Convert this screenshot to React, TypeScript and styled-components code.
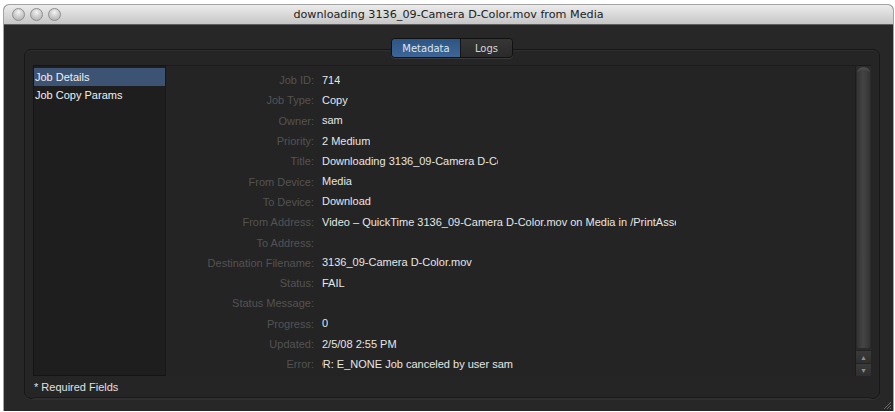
import { createGlobalStyle, styled } from "styled-components"

const GlobalStyle = createGlobalStyle`
  html, body { margin: 0; padding: 0; background: #ffffff; }
  body { font-family: "Liberation Sans", "DejaVu Sans", sans-serif; }
`

interface DetailRow {
  label: string
  value: string
  clip?: number
  shift?: number
}

const rows: DetailRow[] = [
  { label: "Job ID:", value: "714" },
  { label: "Job Type:", value: "Copy" },
  { label: "Owner:", value: "sam" },
  { label: "Priority:", value: "2 Medium" },
  { label: "Title:", value: "Downloading 3136_09-Camera D-Color.mov", clip: 176 },
  { label: "From Device:", value: "Media" },
  { label: "To Device:", value: "Download" },
  { label: "From Address:", value: "Video – QuickTime 3136_09-Camera D-Color.mov on Media in /PrintAssets/", clip: 354 },
  { label: "To Address:", value: "" },
  { label: "Destination Filename:", value: "3136_09-Camera D-Color.mov" },
  { label: "Status:", value: "FAIL" },
  { label: "Status Message:", value: "" },
  { label: "Progress:", value: "0" },
  { label: "Updated:", value: "2/5/08 2:55 PM" },
  { label: "Error:", value: "ERROR: E_NONE  Job canceled by user sam", shift: 31, clip: 300 },
]

const Window = styled.div`
  position: relative;
  margin: 5px 2px 0 4px;
  height: 406px;
  display: flex;
  flex-direction: column;
  background: #272727;
  border-radius: 5px 5px 0 0;
  overflow: hidden;
  box-shadow: 0 0 0 1px #a3a3a3;
`
const TitleBar = styled.div`
  height: 19px;
  flex: none;
  display: grid;
  grid-template-columns: 1fr auto 1fr;
  align-items: center;
  background: linear-gradient(#ececec, #c6c6c6);
  border-bottom: 1px solid #5e5e5e;
`
const Lights = styled.div`
  display: flex;
  gap: 5px;
  padding-left: 8px;
`
const Light = styled.span`
  width: 13px;
  height: 13px;
  box-sizing: border-box;
  border-radius: 50%;
  border: 1px solid #8e8e8e;
  background: radial-gradient(circle at 50% 30%, #f4f4f4 0, #cfcfcf 45%, #a9a9a9 100%);
`
const Title = styled.div`
  font-family: "DejaVu Sans", sans-serif;
  font-size: 11.2px;
  color: #222;
`
const Body = styled.div`
  flex: 1;
  display: flex;
  flex-direction: column;
  padding: 13px 13px 12px 20px;
`
const Segmented = styled.div`
  align-self: center;
  display: flex;
  height: 18px;
  margin-bottom: -9px;
  position: relative;
  z-index: 1;
  border: 1px solid #111;
  border-radius: 4px;
  overflow: hidden;
  box-shadow: 0 1px 0 #3a3a3a;
`
const Segment = styled.div<{ $active: boolean }>`
  display: flex;
  align-items: center;
  justify-content: center;
  width: ${({ $active }) => ($active ? "68px" : "51px")};
  font-family: "DejaVu Sans", sans-serif;
  font-size: 10px;
  color: ${({ $active }) => ($active ? "#dfe6ef" : "#d4d4d4")};
  background: ${({ $active }) =>
    $active ? "linear-gradient(#2d5584, #3d6697)" : "linear-gradient(#363636, #2a2a2a)"};
  border-left: ${({ $active }) => ($active ? "none" : "1px solid #151515")};
`
const Panel = styled.div`
  flex: 1;
  display: flex;
  flex-direction: column;
  padding: 15px 8px 0 8px;
  background: #252525;
  border: 1px solid #171717;
  border-radius: 7px;
  box-shadow: inset 0 1px 0 #2f2f2f, 0 1px 0 #303030;
`
const MainRow = styled.div`
  flex: 1;
  display: flex;
  min-height: 0;
`
const Sidebar = styled.div`
  width: 131px;
  flex: none;
  padding-top: 2px;
  background: #1e1e1e;
  border: 1px solid #141414;
  border-right: 1px solid #181818;
`
const SideItem = styled.div<{ $selected?: boolean }>`
  height: 18px;
  line-height: 18px;
  padding-left: 1px;
  font-size: 11px;
  color: #f0f0f0;
  background: ${({ $selected }) => ($selected ? "#3d5373" : "transparent")};
`
const Details = styled.div`
  flex: 1;
  display: flex;
  background: #242424;
  border-top: 1px solid #1b1b1b;
`
const RowList = styled.div`
  flex: 1;
  padding-top: 4px;
`
const Row = styled.div`
  height: 20.3px;
  display: flex;
  align-items: center;
  font-size: 11px;
`
const Label = styled.div`
  width: 148px;
  flex: none;
  text-align: right;
  color: #535353;
`
const Value = styled.div<{ $clip?: number }>`
  margin-left: 8px;
  line-height: 15px;
  color: #e6e6e6;
  white-space: nowrap;
  overflow: hidden;
  ${({ $clip }) => ($clip ? `width: ${$clip}px;` : "")}
`
const ShiftedText = styled.span<{ $shift: number }>`
  display: inline-block;
  margin-left: -${({ $shift }) => $shift}px;
`
const Scrollbar = styled.div`
  width: 15px;
  flex: none;
  display: flex;
  flex-direction: column;
  background: #2b2b2b;
  border-left: 1px solid #1d1d1d;
`
const Thumb = styled.div`
  flex: 1;
  margin: 1px 1px 2px;
  border-radius: 6px 6px 2px 2px;
  background: linear-gradient(90deg, #333 0, #444 45%, #3e3e3e 70%, #333 100%);
  border-top: 3px solid #4a4a4a;
`
const Arrow = styled.div`
  height: 12px;
  display: flex;
  align-items: center;
  justify-content: center;
  font-size: 7px;
  color: #8c8c8c;
  background: linear-gradient(#3a3a3a, #2f2f2f);
  border-top: 1px solid #232323;
`
const Footer = styled.div`
  height: 21px;
  display: flex;
  align-items: center;
  padding-left: 1px;
  font-size: 11px;
  color: #e0e0e0;
  border-bottom: 1px solid #1b1b1b;
  box-shadow: 0 1px 0 #2e2e2e;
`
const Grip = styled.svg`
  position: absolute;
  right: 1px;
  bottom: 1px;
`

export default function App() {
  return (
    <>
      <GlobalStyle />
      <Window>
        <TitleBar>
          <Lights>
            <Light />
            <Light />
            <Light />
          </Lights>
          <Title>downloading 3136_09-Camera D-Color.mov from Media</Title>
          <div />
        </TitleBar>
        <Body>
          <Segmented>
            <Segment $active>Metadata</Segment>
            <Segment $active={false}>Logs</Segment>
          </Segmented>
          <Panel>
            <MainRow>
              <Sidebar>
                <SideItem $selected>Job Details</SideItem>
                <SideItem>Job Copy Params</SideItem>
              </Sidebar>
              <Details>
                <RowList>
                  {rows.map((row) => (
                    <Row key={row.label}>
                      <Label>{row.label}</Label>
                      <Value $clip={row.clip}>
                        {row.shift ? <ShiftedText $shift={row.shift}>{row.value}</ShiftedText> : row.value}
                      </Value>
                    </Row>
                  ))}
                </RowList>
                <Scrollbar>
                  <Thumb />
                  <Arrow>▲</Arrow>
                  <Arrow>▼</Arrow>
                </Scrollbar>
              </Details>
            </MainRow>
            <Footer>* Required Fields</Footer>
          </Panel>
        </Body>
        <Grip width="10" height="10" viewBox="0 0 10 10">
          <path d="M9 2 L2 9 M9 5 L5 9 M9 8 L8 9" stroke="#6a6a6a" strokeWidth="1" />
        </Grip>
      </Window>
    </>
  )
}
